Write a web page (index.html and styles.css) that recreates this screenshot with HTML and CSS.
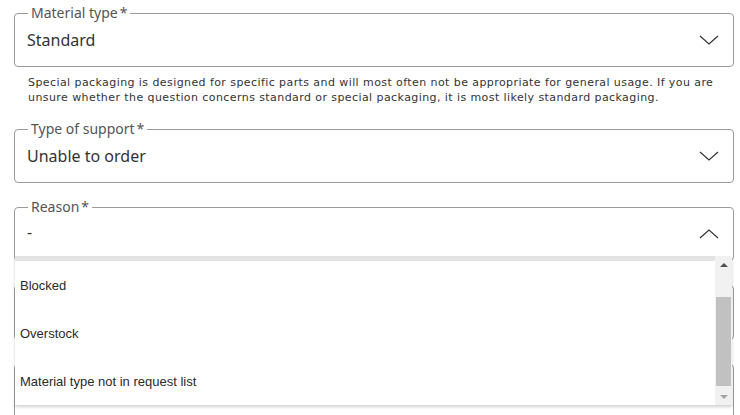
FILE: index.html
```html
<!DOCTYPE html>
<html lang="en">
<head>
<meta charset="utf-8">
<title>Support request</title>
<link rel="stylesheet" href="styles.css">
</head>
<body>
<form class="form">
  <fieldset class="field">
    <legend class="field-label">Material type<span class="req">*</span></legend>
    <div class="field-row">
      <span class="field-value">Standard</span>
      <svg class="chev" width="20" height="10" viewBox="0 0 20 10"><polyline points="1,1 10,9 19,1" fill="none" stroke="#333" stroke-width="1.2"/></svg>
    </div>
  </fieldset>
  <p class="helper">Special packaging is designed for specific parts and will most often not be appropriate for general usage. If you are unsure whether the question concerns standard or special packaging, it is most likely standard packaging.</p>

  <fieldset class="field gap">
    <legend class="field-label">Type of support<span class="req">*</span></legend>
    <div class="field-row">
      <span class="field-value">Unable to order</span>
      <svg class="chev" width="20" height="10" viewBox="0 0 20 10"><polyline points="1,1 10,9 19,1" fill="none" stroke="#333" stroke-width="1.2"/></svg>
    </div>
  </fieldset>

  <div class="select-wrap gap">
    <fieldset class="field">
      <legend class="field-label">Reason<span class="req">*</span></legend>
      <div class="field-row">
        <span class="field-value dash">-</span>
        <svg class="chev" width="20" height="10" viewBox="0 0 20 10"><polyline points="1,9 10,1 19,9" fill="none" stroke="#333" stroke-width="1.2"/></svg>
      </div>
    </fieldset>
    <div class="dropdown">
      <ul class="options">
        <li class="option">Blocked</li>
        <li class="option">Overstock</li>
        <li class="option">Material type not in request list</li>
      </ul>
      <div class="scrollbar">
        <div class="sb-btn"><span class="tri-up"></span></div>
        <div class="sb-track"><div class="sb-thumb"></div></div>
        <div class="sb-btn"><span class="tri-down"></span></div>
      </div>
    </div>
  </div>

  <div class="field-box"></div>
  <div class="field-box"></div>
</form>
</body>
</html>
```

FILE: styles.css
```css
html, body {
  margin: 0;
  padding: 0;
  background: #fff;
}

.form {
  padding: 5px 6px 0 14px;
  font-family: "Noto Sans", "Open Sans", sans-serif;
  color: #333;
}

.field {
  margin: 0;
  padding: 0 14px 0 12px;
  border: 1px solid #9b9b9b;
  border-radius: 4px;
  min-width: 0;
}

.gap {
  margin-top: 16px;
}

.field-label {
  margin-left: 1px;
  padding: 0 3px;
  font-size: 14px;
  line-height: 16px;
  color: #555;
}

.req {
  margin-left: 2px;
}

.field-row {
  display: flex;
  align-items: center;
  justify-content: space-between;
  height: 37px;
  padding-bottom: 8px;
}

.field-value {
  font-size: 16px;
  color: #333;
}

.dash {
  margin-top: -4px;
}

.chev {
  display: block;
  flex: none;
}

.helper {
  margin: 8px 0 0 0;
  padding: 0 14px;
  font-family: "DejaVu Sans", Verdana, sans-serif;
  font-size: 11px;
  line-height: 15px;
  letter-spacing: 0.42px;
  color: #333;
}

.select-wrap {
  position: relative;
}

.field-box {
  margin-top: 24px;
  height: 53px;
  border: 1px solid #9b9b9b;
  border-radius: 4px;
}

.dropdown {
  position: absolute;
  top: 57px;
  left: 1px;
  right: 2px;
  z-index: 5;
  height: 149px;
  display: flex;
  background: #fff;
  box-shadow: 0 2px 3px rgba(0, 0, 0, 0.18);
}

.options {
  flex: 1;
  margin: 0;
  padding: 0;
  list-style: none;
  border-top: 5px solid #e3e3e3;
}

.option {
  height: 48px;
  display: flex;
  align-items: center;
  padding-left: 5px;
  font-family: "Liberation Sans", Arial, sans-serif;
  font-size: 13px;
  color: #2a2a2a;
}

.scrollbar {
  width: 17px;
  flex: none;
  display: flex;
  flex-direction: column;
  background: #f1f1f1;
}

.sb-btn {
  height: 17px;
  display: flex;
  align-items: center;
  justify-content: center;
}

.tri-up {
  width: 0;
  height: 0;
  border-left: 4px solid transparent;
  border-right: 4px solid transparent;
  border-bottom: 4px solid #505050;
}

.tri-down {
  width: 0;
  height: 0;
  border-left: 4px solid transparent;
  border-right: 4px solid transparent;
  border-top: 4px solid #a3a3a3;
}

.sb-track {
  flex: 1;
  padding: 24px 1px 0 1px;
}

.sb-thumb {
  height: 89px;
  background: #c1c1c1;
}
```
